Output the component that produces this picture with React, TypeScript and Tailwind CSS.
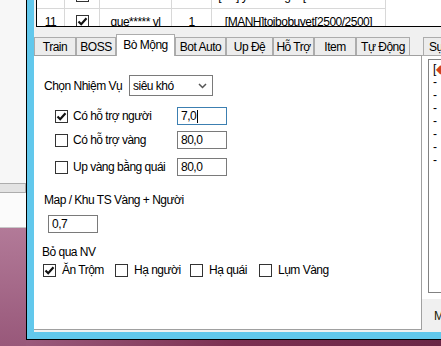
import React from 'react';

const Check = ({ checked = false }: { checked?: boolean }) => (
  <div className="w-[13px] h-[13px] shrink-0 border border-[#333] bg-white flex items-center justify-center">
    {checked && (
      <svg width="11" height="11" viewBox="0 0 11 11">
        <path d="M1.5 5.5 L4.2 8.2 L9.5 2.2" fill="none" stroke="#111" strokeWidth="2.2" />
      </svg>
    )}
  </div>
);

const TextBox = ({ value, focus = false, w = 'w-[50px]' }: { value: string; focus?: boolean; w?: string }) => (
  <div
    className={`${w} h-[18px] shrink-0 bg-white border flex items-center pl-[3px] ${
      focus ? 'border-[#3c7fb1]' : 'border-[#7a7a7a]'
    }`}
  >
    <span>{value}</span>
    {focus && <span className="w-px h-[13px] bg-black ml-px" />}
  </div>
);

const tabs = [
  { label: 'Train', w: 'w-[42px]' },
  { label: 'BOSS', w: 'w-[40px]' },
  { label: 'Bò Mộng', w: 'w-[59px]', active: true },
  { label: 'Bot Auto', w: 'w-[51px]' },
  { label: 'Up Đệ', w: 'w-[47px]' },
  { label: 'Hỗ Trợ', w: 'w-[41px]' },
  { label: 'Item', w: 'w-[42px]' },
  { label: 'Tự Động', w: 'w-[54px]' },
];

const Row = ({ cells, checked }: { cells: string[]; checked: boolean }) => (
  <div className="flex h-[26px] items-center border-b border-[#d8d8d8] w-[349px]">
    <div className="w-[28px] h-full shrink-0 flex items-center justify-center border-r border-[#d8d8d8]">{cells[0]}</div>
    <div className="w-[35px] h-full shrink-0 flex items-center justify-center border-r border-[#d8d8d8]">
      <Check checked={checked} />
    </div>
    <div className="w-[72px] h-full shrink-0 flex items-center justify-center border-r border-[#d8d8d8] whitespace-nowrap">{cells[1]}</div>
    <div className="w-[40px] h-full shrink-0 flex items-center justify-center border-r border-[#d8d8d8]">{cells[2]}</div>
    <div className="w-[174px] h-full shrink-0 flex items-center justify-center border-r border-[#d8d8d8] whitespace-nowrap overflow-hidden">
      {cells[3]}
    </div>
  </div>
);

export default function App() {
  return (
    <div className="w-[441px] h-[346px] overflow-hidden flex font-['Liberation_Sans',Arial,sans-serif] text-[12px] tracking-[-0.5px] text-black leading-none">
      {/* window behind */}
      <div className="w-[26px] shrink-0 h-full flex flex-col">
        <div className="h-[183px] bg-[#f7f7f7]" />
        <div className="h-[10px] bg-[#e3e3e3] border-t border-b border-r border-[#adadad]" />
        <div className="h-[35px] bg-[#fbfbfb] border-b border-[#c8c8c8]" />
        <div className="flex-1 bg-gradient-to-b from-[#b27a98] to-[#98587a]" />
      </div>

      <div className="flex-1 min-w-0 flex flex-col">
        <div className="h-[340px] border-l border-b border-black bg-[#62c8ec] pl-[7px] pb-[7px]">
          <div className="h-[332px] bg-[#f0f0f0] flex flex-col">
            {/* grid */}
            <div className="pl-[2px]">
              <div className="h-[27px] border-l border-b border-black bg-white overflow-hidden">
                <div className="-mt-[17px]">
                  <Row checked={false} cells={['10', 'ooo***** o11', '1', '[NT] yoannang2u[1001770/100...']} />
                  <Row checked cells={['11', 'que***** vl', '1', '[MANH]toibobuyet[2500/2500]']} />
                </div>
              </div>
            </div>

            <div className="mt-[7px] flex flex-1 min-w-0">
              {/* left tab control */}
              <div className="w-[388px] shrink-0 flex flex-col">
                <div className="h-[21px] flex items-end">
                  {tabs.map((t) =>
                    t.active ? (
                      <div
                        key={t.label}
                        className={`${t.w} shrink-0 h-[22px] -mb-px relative z-10 bg-white border-t border-l border-r border-[#acacac] flex items-center justify-center pb-[2px] whitespace-nowrap`}
                      >
                        {t.label}
                      </div>
                    ) : (
                      <div
                        key={t.label}
                        className={`${t.w} shrink-0 h-[18px] bg-[#ececec] border-t border-l border-r border-[#acacac] flex items-center justify-center whitespace-nowrap`}
                      >
                        {t.label}
                      </div>
                    )
                  )}
                </div>
                <div className="h-[275px] bg-white border-t border-r border-b border-[#a0a0a0] flex flex-col">
                  <div className="mt-[19px] flex items-center">
                    <span className="pl-[10px] w-[95px]">Chọn Nhiệm Vụ</span>
                    <div className="w-[84px] h-[21px] border border-[#7a7a7a] flex items-center justify-between pl-[3px] pr-[5px]">
                      <span>siêu khó</span>
                      <svg width="9" height="6" viewBox="0 0 9 6">
                        <path d="M1 1 L4.5 4.5 L8 1" fill="none" stroke="#555" strokeWidth="1.5" />
                      </svg>
                    </div>
                  </div>

                  <div className="mt-[11px] flex items-center h-[18px] pl-[21px]">
                    <Check checked />
                    <span className="ml-[5px] w-[104px]">Có hỗ trợ người</span>
                    <TextBox value="7,0" focus />
                  </div>
                  <div className="mt-[6px] flex items-center h-[18px] pl-[21px]">
                    <Check />
                    <span className="ml-[5px] w-[104px]">Có hỗ trợ vàng</span>
                    <TextBox value="80,0" />
                  </div>
                  <div className="mt-[9px] flex items-center h-[18px] pl-[21px]">
                    <Check />
                    <span className="ml-[5px] w-[104px]">Up vàng bằng quái</span>
                    <TextBox value="80,0" />
                  </div>

                  <div className="mt-[17px] h-[14px] flex items-center pl-[10px]">Map / Khu TS Vàng + Người</div>
                  <div className="mt-[8px] pl-[14px]">
                    <TextBox value="0,7" />
                  </div>

                  <div className="mt-[12px] h-[14px] flex items-center pl-[8px]">Bỏ qua NV</div>
                  <div className="mt-[4px] h-[14px] flex items-center pl-[9px]">
                    <div className="w-[72px] flex items-center">
                      <Check checked />
                      <span className="ml-[6px]">Ăn Trộm</span>
                    </div>
                    <div className="w-[75px] flex items-center">
                      <Check />
                      <span className="ml-[6px]">Hạ người</span>
                    </div>
                    <div className="w-[69px] flex items-center">
                      <Check />
                      <span className="ml-[6px]">Hạ quái</span>
                    </div>
                    <div className="flex items-center">
                      <Check />
                      <span className="ml-[6px]">Lụm Vàng</span>
                    </div>
                  </div>
                </div>
              </div>

              {/* right tab control */}
              <div className="flex-1 min-w-0 flex flex-col overflow-hidden">
                <div className="h-[21px] flex items-end pl-px">
                  <div className="w-[48px] h-[18px] shrink-0 whitespace-nowrap bg-[#ececec] border-t border-l border-r border-[#acacac] flex items-center pl-[5px]">
                    Sự kiện
                  </div>
                </div>
                <div className="h-[244px] bg-white border-t border-[#acacac] pl-[6px] pt-[3px]">
                  <div className="w-[80px] h-[234px] border border-[#828282] pl-[4px] pt-[2px] flex flex-col">
                    <div className="h-[13px] flex items-center whitespace-nowrap">
                      [<span className="text-[#d04020]">◆</span>
                    </div>
                    {[0, 1, 2, 3, 4, 5, 6].map((i) => (
                      <div key={i} className="h-[13px] flex items-center">
                        -
                      </div>
                    ))}
                  </div>
                </div>
                <div className="pl-[12px] pt-[11px] text-[#1a1a00] whitespace-nowrap">Mở</div>
              </div>
            </div>
          </div>
        </div>
        <div className="flex-1 bg-gradient-to-r from-[#9a5a7c] via-[#7c3052] to-[#6a2646]" />
      </div>
    </div>
  );
}
